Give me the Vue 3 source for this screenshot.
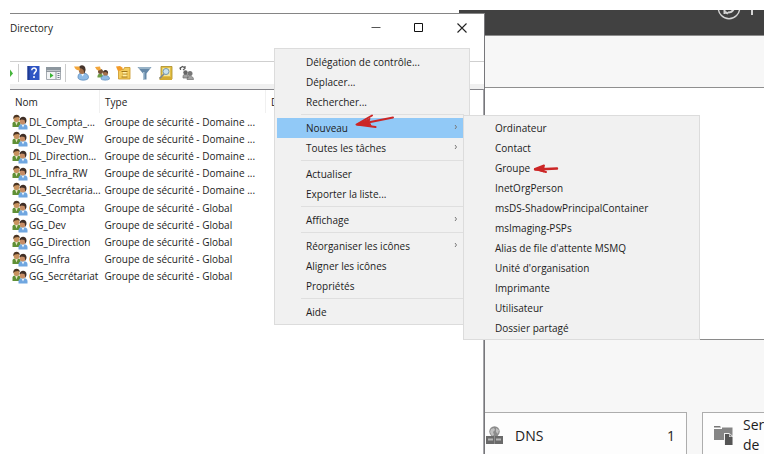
<script setup>
const columns = ['Nom', 'Type', 'D']
const rows = [
  ['DL_Compta_...', 'Groupe de sécurité - Domaine ...'],
  ['DL_Dev_RW', 'Groupe de sécurité - Domaine ...'],
  ['DL_Direction...', 'Groupe de sécurité - Domaine ...'],
  ['DL_Infra_RW', 'Groupe de sécurité - Domaine ...'],
  ['DL_Secrétaria...', 'Groupe de sécurité - Domaine ...'],
  ['GG_Compta', 'Groupe de sécurité - Global'],
  ['GG_Dev', 'Groupe de sécurité - Global'],
  ['GG_Direction', 'Groupe de sécurité - Global'],
  ['GG_Infra', 'Groupe de sécurité - Global'],
  ['GG_Secrétariat', 'Groupe de sécurité - Global']
]
const menu = [
  [{ t: 'Délégation de contrôle...' }, { t: 'Déplacer...' }, { t: 'Rechercher...' }],
  [{ t: 'Nouveau', sub: true, on: true }, { t: 'Toutes les tâches', sub: true }],
  [{ t: 'Actualiser' }, { t: 'Exporter la liste...' }],
  [{ t: 'Affichage', sub: true }],
  [{ t: 'Réorganiser les icônes', sub: true }, { t: 'Aligner les icônes' }, { t: 'Propriétés' }],
  [{ t: 'Aide' }]
]
const submenu = [
  'Ordinateur', 'Contact', 'Groupe', 'InetOrgPerson', 'msDS-ShadowPrincipalContainer',
  'msImaging-PSPs', "Alias de file d'attente MSMQ", "Unité d'organisation",
  'Imprimante', 'Utilisateur', 'Dossier partagé'
]
</script>

<template>
  <main class="page">
    <div class="desktop">
      <section class="manager">
        <header class="manager-head">
          <svg width="50" height="25" viewBox="0 0 50 25" fill="none" stroke="#d4d4d4">
            <circle cx="15" cy="-2" r="10.7" stroke-width="1.4" />
            <path d="M10.500 4V-1M11 2l3 1.500M14 2.500c3 0 5-1.500 6-4" stroke-width="2" />
            <path d="M38 0v5" stroke-width="2" />
          </svg>
        </header>
        <div class="manager-strip"></div>
        <div class="manager-body"></div>
        <div class="tiles">
          <article class="tile">
            <svg width="17" height="18" viewBox="0 0 17 18">
              <circle cx="8.500" cy="5.500" r="5.200" fill="#8b8b8b" />
              <path d="M5 3l3-1 1 2-2 2 1 3-2 1-2-4zM10 2l3 2-1 4-2-2z" fill="#c0c0c0" />
              <path d="M0 10h17v8H0z" fill="#6a6a6a" />
              <path d="M2 12.500h5v2H2zM10 12.500h5v2h-5z" fill="#b5b5b5" />
              <path d="M8 10h1v8H8z" fill="#8d8d8d" />
            </svg>
            <span>DNS</span>
            <span class="count">1</span>
          </article>
          <article class="tile wide">
            <svg width="19" height="19" viewBox="0 0 19 19">
              <path d="M0 0h6l1 1.500h-7z" fill="#777" />
              <path d="M0 3h8V1.500h10.500V14H0z" fill="#858585" />
              <path d="M10 7h5l4 3v9h-9z" fill="#f2f2f2" />
              <path d="M11 8h4v3h3.500v8H11z" fill="#555" />
              <path d="M15.500 8l3 2.500h-3z" fill="#777" />
            </svg>
            <span class="lines">Ser<br />de</span>
          </article>
        </div>
      </section>

      <section class="directory">
        <header class="titlebar">
          <h1>Directory</h1>
          <div class="controls">
            <button type="button" aria-label="Réduire">
              <svg width="12" height="12" viewBox="0 0 12 12"><path d="M1.500 5.500h9" stroke="#555" /></svg>
            </button>
            <button type="button" aria-label="Agrandir">
              <svg width="12" height="12" viewBox="0 0 12 12"><path d="M1.500 1.500h8v8h-8z" fill="none" stroke="#111" /></svg>
            </button>
            <button type="button" aria-label="Fermer">
              <svg width="12" height="12" viewBox="0 0 12 12"><path d="M1.500 1.500l9 9M10.500 1.500l-9 9" stroke="#222" stroke-width="1.100" /></svg>
            </button>
          </div>
        </header>

        <div class="toolbar">
          <svg width="3" height="16" viewBox="0 0 3 16"><path d="M0 4.500L3 8.500 0 12z" fill="#45b53c" /></svg>
          <i class="divider"></i>
          <svg width="13" height="16" viewBox="0 0 13 16">
            <path d="M.5 1h12v14H.5z" fill="#2f55c4" /><path d="M.5 1h2v14h-2z" fill="#203b91" />
            <path d="M4.800 5.200c0-3 4.700-2.800 4.500 0C9.200 7.200 7 7.200 7 9.500" fill="none" stroke="#fff" stroke-width="1.500" />
            <circle cx="7" cy="12" r="1" fill="#fff" />
          </svg>
          <svg class="console" width="15" height="13" viewBox="0 0 15 13">
            <path d="M.5 1h14v11.500H.5z" fill="#f2f4f5" stroke="#a5abb1" /><path d="M0 0h15v3.500H0z" fill="#8d979f" />
            <path d="M10 4v8M0 4.500h15" stroke="#8f979e" />
            <path d="M4 6l3.500 2.500L4 11z" fill="#38b333" /><path d="M11.500 6.500h2M11.500 8.500h2M11.500 10.500h2" stroke="#6c7c8d" />
          </svg>
          <i class="divider near"></i>
          <svg width="15" height="16" viewBox="0 0 15 16">
            <path d="M4 12.500c0-4 2-4.500 5-4.500s5.500 1.500 5.500 4.500c0 3.500-10.500 3.500-10.500 0z" fill="#8fbbe6" stroke="#5c8cbd" stroke-width=".8" />
            <path d="M7 8.500l1.500 3 2-3z" fill="#eef5fa" />
            <ellipse cx="8" cy="5" rx="3.200" ry="4" fill="#a5714b" /><path d="M5 3c0-4 7-4 6.500 2L10.500 9l-1-4-2-1.500z" fill="#46352c" />
            <path d="M0 1.500h5.500l.5 4-3-.5-1.500-1z" fill="#f3a63a" />
          </svg>
          <svg width="15" height="16" viewBox="0 0 15 16">
            <path d="M2.500 11.500c0-4 5.500-4 5.500 0v1H2.500z" fill="#6e9c46" /><path d="M6 14c0-5 8.500-5 8.500 0-1 1.500-7.500 1.500-8.500 0z" fill="#8fbbe6" stroke="#5c8cbd" stroke-width=".7" />
            <circle cx="5.500" cy="6.500" r="2.500" fill="#755238" /><circle cx="10.500" cy="8" r="2.600" fill="#a5714b" />
            <path d="M8 7.500c0-3.500 5.500-3.500 5 1l-2-1.500z" fill="#46352c" />
            <path d="M0 2l5-.5 1 3.500-3 .5-1.500-1z" fill="#f3a63a" />
          </svg>
          <svg width="15" height="16" viewBox="0 0 15 16">
            <path d="M2.500 4.500h5l1-2h5.500V14H2.500z" fill="#f2cb5c" stroke="#c99424" stroke-width=".8" />
            <path d="M5.500 6.500h6M6.500 9h5M5.500 12h6" stroke="#a1771d" fill="none" /><path d="M7 7h3.500v1.500H7zM7 9.700h3.500v1.600H7z" fill="#fff0ad" />
            <path d="M0 1.500l4-.5 3 2-2 2.500-3 .5-1-2z" fill="#f49b28" />
          </svg>
          <svg width="15" height="16" viewBox="0 0 15 16">
            <path d="M.5 2h14L9.500 8.500v6h-3.500v-6z" fill="#6689a8" /><path d="M1 2h13l-1.500 2h-10z" fill="#98b3c7" /><path d="M6 7h1.500v7H6z" fill="#a9c2d4" />
          </svg>
          <svg width="15" height="16" viewBox="0 0 15 16">
            <path d="M3 1.500h11V14H3z" fill="#e3c047" stroke="#a98a22" stroke-width=".8" /><path d="M1.500 12H14v3H1.500z" fill="#d3ab34" />
            <path d="M4.500 3h7.500v8H4.500z" fill="#f3e6a0" /><circle cx="8" cy="6.500" r="3" fill="#c9e2ef" stroke="#7798a9" /><path d="M6 9l-4.500 4.500" stroke="#7d8791" stroke-width="1.600" />
          </svg>
          <svg width="15" height="16" viewBox="0 0 15 16">
            <path d="M4 12c0-4 5-4 5-1v2H4zM8 14.500c0-4.500 6.500-4.500 6.500 0z" fill="#a2a2a2" stroke="#6f6f6f" stroke-width=".7" />
            <circle cx="6.500" cy="7.500" r="2.200" fill="#666" /><circle cx="11" cy="8.500" r="2.500" fill="#777" />
            <path d="M.5 3.500l3-2 2.500 1.500M6 1v2.500L4 5M1.500 2v3" stroke="#5b5b5b" fill="none" stroke-width="1.200" />
          </svg>
        </div>

        <div class="list">
          <table>
            <thead>
              <tr><th v-for="c in columns" :key="c" scope="col">{{ c }}</th></tr>
            </thead>
            <tbody>
              <tr v-for="r in rows" :key="r[0]">
                <td>
                  <div class="name">
                    <svg width="16" height="16" viewBox="0 0 16 16">
                      <path d="M.5 13V9.500C.5 6.500 8.500 6.500 8.500 9.500V13z" fill="#5f8f35" /><path d="M3 7.500l1.500 4L6 7.500z" fill="#e8e6c3" />
                      <ellipse cx="4.500" cy="4.700" rx="2.900" ry="3.300" fill="#c8935f" /><path d="M1.300 5C.5-.5 8-.5 7.800 4L6 3 3 3.500z" fill="#4b3523" />
                      <path d="M6.500 15.500V13c0-4 9-4 9 0v2.500z" fill="#6fa6e0" /><path d="M9.500 10.500l1.500 3 1.500-3z" fill="#eff6fb" />
                      <ellipse cx="10.700" cy="7" rx="3" ry="3.500" fill="#c78d66" /><path d="M7.500 6.500c0-5 7.500-5 7 .5l-1 3-1-4-3-.500z" fill="#3f2e26" />
                    </svg>
                    <span>{{ r[0] }}</span>
                  </div>
                </td>
                <td>{{ r[1] }}</td>
                <td></td>
              </tr>
            </tbody>
          </table>
        </div>
      </section>

      <nav class="menu context" aria-label="Menu contextuel">
        <ul v-for="(group, i) in menu" :key="i">
          <li v-for="item in group" :key="item.t">
            <button type="button" :class="{ on: item.on }">
              <span>{{ item.t }}</span>
              <svg v-if="item.sub" width="4" height="8" viewBox="0 0 4 8"><path d="M1 1l1.500 2L1 5" fill="none" stroke="#777" /></svg>
            </button>
          </li>
        </ul>
      </nav>

      <nav class="menu sub" aria-label="Nouveau">
        <ul>
          <li v-for="s in submenu" :key="s"><button type="button"><span>{{ s }}</span></button></li>
        </ul>
      </nav>

      <svg class="arrow long" width="42" height="18" viewBox="0 0 42 18" fill="none" stroke="#cc2626" stroke-linecap="round" stroke-linejoin="round">
        <path d="M39 3.500L4 10.500" stroke-width="2" /><path d="M18 1.500L2.500 10.500l19 2.500" stroke-width="2" /><path d="M3 10.500l13-6-1 3 2 4z" fill="#cc2626" stroke-width="1" />
      </svg>
      <svg class="arrow short" width="28" height="12" viewBox="0 0 28 12" fill="none" stroke="#cc2626" stroke-linecap="round" stroke-linejoin="round">
        <path d="M26 5.500L4 6.500" stroke-width="2.400" /><path d="M13 2.500L4 6l11 3" stroke-width="2" /><path d="M4 6l9-3v5.500z" fill="#cc2626" />
      </svg>
    </div>
  </main>
</template>

<style>
body {
  background: #fff;
}
</style>

<style scoped>
.page {
  box-sizing: border-box;
  min-height: 100vh;
  padding: 10px 9px 10px 10px;
  display: flex;
  font-family: "Open Sans", "Noto Sans", sans-serif;
  font-size: 10px;
  color: #1c1c1c;
}
.desktop {
  position: relative;
  flex: 1;
  overflow: hidden;
}
button {
  font: inherit;
  color: inherit;
  background: none;
  border: 0;
  padding: 0;
  margin: 0;
}
svg {
  display: block;
  flex: none;
}

.manager {
  position: absolute;
  inset: 0 0 0 449px;
  display: flex;
  flex-direction: column;
  background: #f7f7f7;
}
.manager-head {
  display: flex;
  justify-content: flex-end;
  height: 25px;
  background: #414141;
  border-bottom: 1px solid #8c8c8c;
}
.manager-strip {
  height: 51px;
  border-bottom: 1px solid #8f8f8f;
}
.manager-body {
  flex: 1;
  background: #fff;
  border-bottom: 1px solid #8a8a8a;
}
.tiles {
  display: flex;
  gap: 15px;
  height: 42px;
  padding: 72px 0 0 10px;
  font-size: 14px;
}
.tile {
  display: flex;
  align-items: center;
  gap: 12px;
  box-sizing: border-box;
  width: 218px;
  height: 45px;
  padding: 0 11px 0 16px;
  background: #fdfdfd;
  border: 1px solid #adadad;
  border-bottom: 0;
  flex: none;
}
.tile.wide {
  padding: 0 0 0 11px;
  gap: 10px;
}
.count {
  margin-left: auto;
}
.lines {
  line-height: 20px;
}

.directory {
  position: absolute;
  inset: 3px auto 0 0;
  width: 475px;
  box-sizing: border-box;
  display: flex;
  flex-direction: column;
  background: #fff;
  border-top: 1px solid #858585;
  border-right: 1px solid #77777b;
}
.titlebar {
  display: flex;
  justify-content: space-between;
  align-items: center;
  height: 27px;
  margin-bottom: 20px;
}
h1 {
  margin: 0;
  font-size: 10px;
  font-weight: 400;
}
.controls {
  display: flex;
  gap: 31px;
  padding-right: 16px;
}
.toolbar {
  display: flex;
  align-items: center;
  gap: 6px;
  height: 22px;
  border-top: 1px solid #cfcfcf;
  border-bottom: 5px solid #f0f0f0;
}
.divider {
  width: 1px;
  height: 18px;
  background: #cccccc;
  margin: 0 2px 0 -1px;
}
.divider.near {
  margin: 0 2px 0 -2px;
}
.list {
  flex: 1;
  border-top: 1px solid #85858a;
  border-right: 1px solid #a6a6aa;
}
table {
  width: 100%;
  height: 195px;
  table-layout: fixed;
  border-collapse: collapse;
}
th {
  height: 23px;
  padding: 0 0 0 5px;
  font-weight: 400;
  text-align: left;
  border-right: 1px solid #f0f0f0;
}
th:first-child {
  width: 84px;
}
th:nth-child(2) {
  width: 160px;
}
th:last-child {
  border: 0;
}
td {
  padding: 0 0 0 5px;
  line-height: 16px;
  white-space: nowrap;
}
td:first-child {
  padding-left: 2px;
}
.name {
  display: flex;
  gap: 1px;
  height: 16px;
}

.menu {
  position: absolute;
  box-sizing: border-box;
  background: #f1f1f1;
  border: 1px solid #dcdcdc;
  padding: 2px;
}
.context {
  left: 264px;
  top: 38px;
  width: 196px;
  padding: 3px 5px 2px 2px;
}
.sub {
  left: 453px;
  top: 105px;
  width: 237px;
  padding-bottom: 1px;
}
.menu ul {
  list-style: none;
  margin: 0;
  padding: 0;
}
.menu ul + ul::before {
  content: "";
  display: block;
  height: 3px;
  margin: 0 0 3px 24px;
  border-bottom: 1px solid #dfdfdf;
  box-sizing: border-box;
}
.menu button {
  display: flex;
  align-items: center;
  justify-content: space-between;
  width: 100%;
  height: 20px;
  padding: 0 6px 0 29px;
  white-space: nowrap;
}
.menu .on {
  background: #91c9f7;
}
.arrow {
  position: absolute;
}
.long {
  left: 344px;
  top: 104px;
}
.short {
  left: 521px;
  top: 153px;
}
</style>
